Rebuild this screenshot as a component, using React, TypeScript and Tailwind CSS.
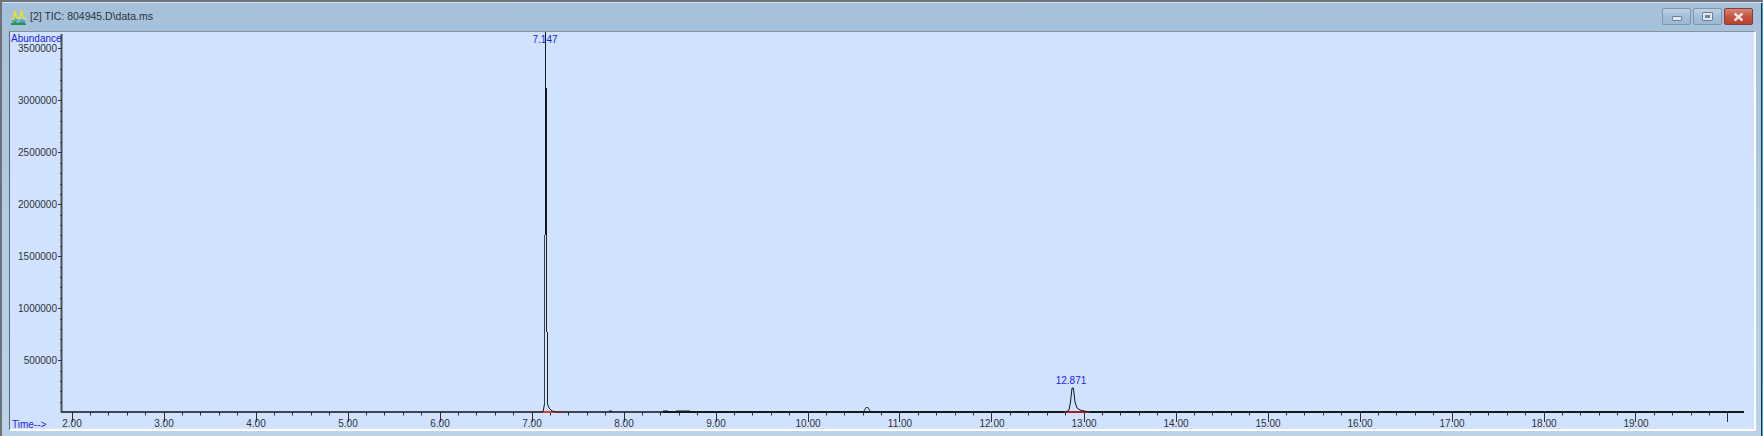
import React from 'react';

const X_ZERO = 72;
const X_STEP = 92;
const BASE_Y = 412.6;
const Y_STEP = 51.95;

const timeToX = (t: number) => X_ZERO + (t - 2) * X_STEP;

const timeLabels = Array.from({ length: 18 }, (_, i) => i + 2);
const xTicks = Array.from({ length: 91 }, (_, i) => i).map((i) => ({
  x: Math.floor(X_ZERO + i * 18.4) + 0.5,
  major: i % 5 === 0,
}));
const yLabels = [500000, 1000000, 1500000, 2000000, 2500000, 3000000, 3500000];
const yTicks = Array.from({ length: 36 }, (_, i) => i + 1);

// foot of the big peak and the 12.871 peak; the tall part of 7.147 is drawn line by line below
const TIC_PATH =
  'M62 412 L543 412 L544.5 404 M547.5 404 L549 408 L552 411 L556 412 L1066 412 L1069 410 L1070.5 402 L1072 388 L1073.4 388 L1075 402 L1077 408 L1080 410 L1084 411 L1090 412 L1744 412';

const TitleIcon = () => (
  <svg width="16" height="16" viewBox="0 0 16 16" className="shrink-0">
    <path d="M0 14 L3 14 L4 8 L5 14 L8 14 L9 10 L10 14 L13 13 L15 15 L15 16 L0 16 Z" fill="#1f9a4a" />
    <path d="M1 11 L2.5 10 L4 2 L5.5 9 L9 9 L10.5 1 L12 9 L15 10" fill="none" stroke="#e3e32c" strokeWidth="1.4" />
    <path d="M2 14 L2 11 M6 14 L6 10 M11 15 L11 10 M13 15 L13 11" stroke="#1c7fd0" strokeWidth="1" />
  </svg>
);

const WindowButton = ({ kind }: { kind: 'min' | 'max' | 'close' }) => {
  if (kind === 'close') {
    return (
      <div className="flex h-[17px] w-[29px] items-center justify-center rounded-[2px] border border-[#7d3f3f] bg-gradient-to-b from-[#d8867a] via-[#c4533f] to-[#b8412f]">
        <svg width="13" height="10" viewBox="0 0 13 10">
          <path d="M2.5 1.5 L10.5 8.5 M10.5 1.5 L2.5 8.5" stroke="#ece4e2" strokeWidth="2.4" />
        </svg>
      </div>
    );
  }
  return (
    <div className="flex h-[17px] w-[29px] items-center justify-center rounded-[2px] border border-[#7f96ad] bg-gradient-to-b from-[#bcd1e6] via-[#a5bfd9] to-[#9db8d3]">
      {kind === 'min' ? (
        <div className="mt-[3px] h-[5px] w-[10px] rounded-[1px] border border-[#6f7f90] bg-[#e4e8ec]" />
      ) : (
        <div className="h-[9px] w-[11px] rounded-[1px] border border-[#6f7f90] bg-[#e4e8ec] p-[2px]">
          <div className="h-full w-full bg-[#6f86a0]" />
        </div>
      )}
    </div>
  );
};

export default function App() {
  return (
    <div className="flex h-[436px] w-[1763px] flex-col overflow-hidden border-t-2 border-l-2 border-[#6e7276] bg-gradient-to-b from-[#a5c0da] via-[#b3cbe3] to-[#bcd3ea] font-['Liberation_Sans',sans-serif] shadow-[inset_0_1px_0_#d4e2ef,inset_-1px_0_0_#22b8dc,inset_-2px_0_0_#23333f]">
      <div className="flex h-[29px] shrink-0 items-center pl-[9px] pr-[10px]">
        <TitleIcon />
        <span className="ml-[3px] text-[10.5px] text-[#2b3440]">[2] TIC: 804945.D\data.ms</span>
        <div className="ml-auto flex gap-[2px]">
          <WindowButton kind="min" />
          <WindowButton kind="max" />
          <WindowButton kind="close" />
        </div>
      </div>
      <div className="ml-[7px] mr-[7px] h-[400px] border-t border-l border-t-[#8a929b] border-l-[#5d6670] border-r-2 border-b-2 border-r-white border-b-white bg-[#d0e2fd]">
        <svg width="1744" height="397" viewBox="10 32 1744 397" className="block text-[10px]">
          {/* y axis */}
          <line x1="61.5" y1="34" x2="61.5" y2="413" stroke="#4a4f57" strokeWidth="2" />
          {yTicks.map((n) => {
            const y = Math.floor(BASE_Y - (n * Y_STEP) / 5) + 0.5;
            const major = n % 5 === 0;
            return (
              <line key={n} x1={major ? 58 : 60} y1={y} x2="62" y2={y} stroke="#33373d" strokeWidth="1" />
            );
          })}
          {yLabels.map((v) => (
            <text key={v} x="57" y={BASE_Y - (v / 500000) * Y_STEP + 3.5} textAnchor="end" fill="#2f3338">
              {v}
            </text>
          ))}

          {/* x axis */}
          <line x1="61" y1="412" x2="1744" y2="412" stroke="#4a4f57" strokeWidth="1.6" />
          <line x1="663" y1="412" x2="1744" y2="412" stroke="#15181c" strokeWidth="2" />
          {xTicks.map((t) => (
            <line
              key={t.x}
              x1={t.x}
              y1="412"
              x2={t.x}
              y2={t.major ? 422 : 415.5}
              stroke="#2c3036"
              strokeWidth="1"
            />
          ))}
          {timeLabels.map((t) => (
            <text key={t} x={timeToX(t)} y="427" textAnchor="middle" fill="#2f3338">
              {t}.00
            </text>
          ))}

          {/* integration baselines */}
          <line x1="540" y1="412" x2="563" y2="412" stroke="#e8303a" strokeWidth="1.5" />
          <line x1="1064" y1="412" x2="1090" y2="412" stroke="#c8262e" strokeWidth="1.5" />

          {/* TIC trace */}
          <path d={TIC_PATH} fill="none" stroke="#15181c" strokeWidth="1" />
          <path d="M545.5 32 V88" stroke="#15181c" strokeWidth="1" fill="none" />
          <path d="M546 88 V235" stroke="#10141c" strokeWidth="2" fill="none" />
          <path d="M544.5 235 V404" stroke="#3a4048" strokeWidth="1" fill="none" />
          <path d="M546.5 235 V332" stroke="#20242a" strokeWidth="1" fill="none" />
          <path d="M547.5 332 V404" stroke="#20242a" strokeWidth="1" fill="none" />
          <path d="M864 411 L866 407.5 L868 407.5 L870 411" fill="none" stroke="#30343a" strokeWidth="1" />
          <path d="M609 411 L612 411 M663 411 L668 411 M676 411 L690 411" stroke="#15181c" strokeWidth="1" />

          {/* labels */}
          <text x="11" y="42" fill="#2222ee">Abundance</text>
          <text x="12" y="428" fill="#2222ee">Time--&gt;</text>
          <text x="545" y="43" textAnchor="middle" fill="#2222ee">7.147</text>
          <text x="1071" y="384" textAnchor="middle" fill="#2222ee">12.871</text>
        </svg>
      </div>
    </div>
  );
}
